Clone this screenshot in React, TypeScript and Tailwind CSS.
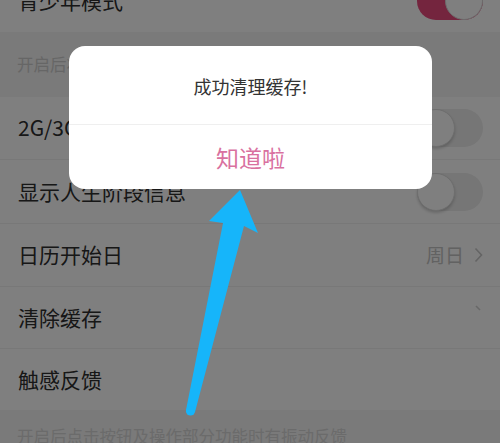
import React from "react";

const font = { fontFamily: '"Noto Sans CJK SC", "Noto Sans", sans-serif' };

function Toggle({ on }: { on?: boolean }) {
  if (on) {
    return (
      <div className="relative h-[38px] w-[66px] rounded-full bg-[#e84a7c]">
        <div className="absolute right-0 top-0 h-[38px] w-[38px] rounded-full border border-[#d8d8d8] bg-white" />
      </div>
    );
  }
  return (
    <div className="relative h-[38px] w-[66px] rounded-full bg-[#ececec]">
      <div className="absolute left-0 top-0 h-[38px] w-[38px] rounded-full border border-[#dcdcdc] bg-white shadow-[0_2px_3px_rgba(0,0,0,0.18)]" />
    </div>
  );
}

export default function App() {
  return (
    <div className="relative h-[443px] w-[500px] overflow-hidden bg-[#f4f4f4]" style={font}>
      <div className="-mt-[30px] flex flex-col">
        <div className="flex h-[62px] items-center justify-between bg-white pl-[18px] pr-[17px]">
          <span className="text-[21px] text-[#2e2e2e]">青少年模式</span>
          <Toggle on />
        </div>
        <div className="flex h-[65px] items-center bg-[#f4f4f4] pl-[17px]">
          <span className="whitespace-nowrap text-[16.5px] text-[#cdcdcd]">开启后将对内容进行筛选过滤</span>
        </div>
        <div className="flex flex-col bg-white">
          <div className="flex h-[63px] items-center justify-between border-b border-[#f0f0f0] pl-[18px] pr-[17px]">
            <span className="text-[21px] text-[#2e2e2e]">2G/3G/4G网络下自动同步</span>
            <Toggle />
          </div>
          <div className="flex h-[64px] items-center justify-between border-b border-[#f0f0f0] pl-[18px] pr-[17px]">
            <span className="text-[21px] text-[#2e2e2e]">显示人生阶段信息</span>
            <Toggle />
          </div>
          <div className="flex h-[63px] items-center justify-between border-b border-[#f0f0f0] pl-[18px] pr-[17px]">
            <span className="text-[21px] text-[#2e2e2e]">日历开始日</span>
            <span className="flex items-center gap-[10px] text-[19px] text-[#c4c4c4]">
              周日
              <svg width="9" height="16" viewBox="0 0 9 16" fill="none">
                <path d="M1.5 1.5 L7.5 8 L1.5 14.5" stroke="#c8c8c8" strokeWidth="1.6" />
              </svg>
            </span>
          </div>
          <div className="flex h-[62px] items-center justify-between border-b border-[#f0f0f0] pl-[18px] pr-[17px]">
            <span className="text-[21px] text-[#2e2e2e]">清除缓存</span>
            <svg width="9" height="16" viewBox="0 0 9 16" fill="none" className="-mt-[14px]">
              <path d="M2 3 L6 7" stroke="#d0d0d0" strokeWidth="1.6" />
            </svg>
          </div>
          <div className="flex h-[61px] items-center justify-between pl-[18px] pr-[17px]">
            <span className="text-[21px] text-[#2e2e2e]">触感反馈</span>
          </div>
        </div>
        <div className="flex h-[60px] items-start bg-[#f4f4f4] pl-[17px] pt-[14px]">
          <span className="whitespace-nowrap text-[16.5px] text-[#d6d6d6]">开启后点击按钮及操作部分功能时有振动反馈</span>
        </div>
      </div>

      <div className="absolute inset-0 bg-black/50" />

      <div className="absolute left-[69px] top-[46px] flex w-[363px] flex-col overflow-hidden rounded-[16px] bg-white">
        <div className="flex h-[79px] items-center justify-center border-b border-[#efefef] pt-[2px]">
          <span className="text-[18px] text-[#333]">成功清理缓存!</span>
        </div>
        <div className="flex h-[64px] items-center justify-center">
          <span className="text-[23px] text-[#d9719f]">知道啦</span>
        </div>
      </div>

      <svg className="absolute left-0 top-0" width="500" height="443" viewBox="0 0 500 443">
        <polygon
          points="240,190 258,233 244,226 195,412 186,410 223,223 209,221"
          fill="#16b5fa"
        />
        <circle cx="190.5" cy="411" r="4.6" fill="#16b5fa" />
      </svg>
    </div>
  );
}
